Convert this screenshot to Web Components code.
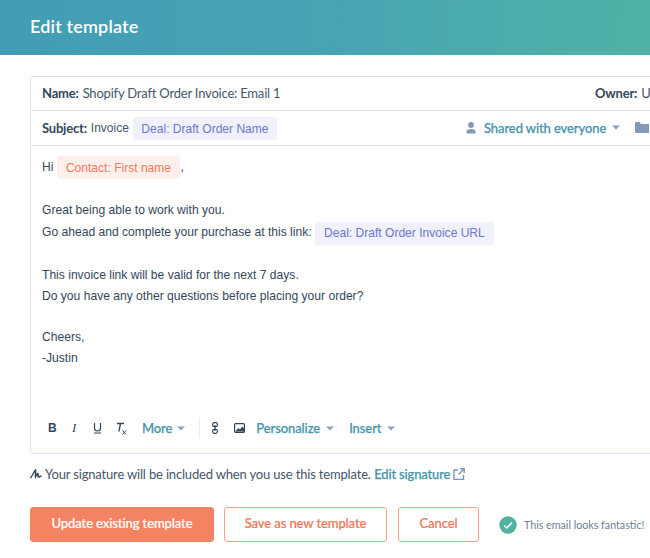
<!DOCTYPE html>
<html><head><meta charset="utf-8">
<style>
html,body{margin:0;padding:0;width:650px;height:558px;overflow:hidden;background:#fff;font-family:Lato,sans-serif;color:#33475b}
</style></head><body>
<template id="t-app"><style>
:host{display:flex;flex-direction:column;width:650px;height:558px;overflow:hidden}
main{display:flex;flex-direction:column;padding:21px 0 0 30px;width:700px;box-sizing:border-box}
</style><edit-header>Edit template</edit-header><main><slot></slot></main></template>

<template id="t-header"><style>
:host{display:flex;align-items:center;height:55px;padding:0 0 3px 30px;box-sizing:border-box;background:linear-gradient(95deg,#429db5 0%,#46a4b3 50%,#4fb3a6 100%);color:#fff;font:600 18px Lato,sans-serif;letter-spacing:.17px}
</style><slot></slot></template>

<template id="t-card"><style>
:host{display:flex;flex-direction:column;width:670px;height:378px;box-sizing:border-box;border:1px solid #dbe3ee;border-radius:3px 0 0 3px}
</style><slot></slot></template>

<template id="t-row"><style>
:host{display:flex;align-items:center;box-sizing:border-box;padding-left:11px;height:34px;padding-bottom:2px;border-bottom:1px solid #dbe3ee;font:400 13px Lato,sans-serif;letter-spacing:-.2px;color:#43566a;white-space:nowrap}
:host([sub]){height:35px;padding-bottom:1px}
b{font-weight:700;color:#33475b;margin-right:4px}
</style><b><slot name="label"></slot></b><slot></slot></template>

<template id="t-token"><style>
:host{display:inline-flex;align-items:center;height:23px;padding:0 8.5px;box-sizing:border-box;border-radius:2px;font:400 12.05px "Liberation Sans",sans-serif;letter-spacing:0;background:#f0f1fa;color:#6a78d1;white-space:nowrap;vertical-align:middle}
:host([contact]){background:#fdf0ec;color:#f2785a}
</style><slot></slot></template>

<template id="t-toolbar"><style>
:host{display:flex;align-items:center;height:24px;padding-left:17px;margin-top:auto;margin-bottom:13px;font:500 13px Lato,sans-serif;letter-spacing:-.1px;-webkit-text-stroke:.25px #4a95ad;color:#4a95ad}
::slotted(svg){flex:none}
</style><slot></slot></template>

<template id="t-btn"><style>
:host{display:inline-flex;align-items:center;justify-content:center;height:35px;box-sizing:border-box;border:1px solid #f9a28d;border-radius:3px;background:#fff;color:#f2785a;font:500 13px Lato,sans-serif;letter-spacing:-.1px;-webkit-text-stroke:.2px currentColor;white-space:nowrap;padding-bottom:3px}
:host([primary]){background:#f38363;border-color:#f38363;color:#fff}
</style><slot></slot></template>

<edit-app>
<edit-card>
 <edit-row><span slot="label">Name:</span><span>Shopify Draft Order Invoice: Email 1</span><span style="margin-left:auto;display:flex;width:104px"><b style="font-weight:700;color:#33475b;margin-right:4px">Owner:</b>U</span></edit-row>
 <edit-row sub><span slot="label">Subject:</span><span style="font:400 12px 'Liberation Sans',sans-serif;letter-spacing:0">Invoice</span><merge-token style="margin-left:4px;margin-top:2px">Deal: Draft Order Name</merge-token>
  <span style="margin-left:auto;width:233px;display:flex;align-items:center;color:#4a95ad;font:500 13px Lato,sans-serif;letter-spacing:-.1px;-webkit-text-stroke:.25px #4a95ad">
   <svg width="10" height="12" viewBox="0 0 10 12" style="margin-right:8px"><circle cx="5" cy="3" r="2.9" fill="#8499b5"/><path d="M.5 11.5V9.6C.5 7.9 2.2 7 5 7s4.500.9 4.500 2.600v1.900z" fill="#8499b5"/></svg>Shared with everyone<svg width="8" height="5" viewBox="0 0 8 5" style="margin-left:6px"><path d="M0 .5h8L4 4.500z" fill="#8fa3bc"/></svg>
   <svg style="margin-left:auto;margin-right:50px" width="14" height="11" viewBox="0 0 14 11"><path d="M0 1.500C0 .6.6 0 1.500 0h3L6 2h8v9H1.500C.6 11 0 10.400 0 9.500z" fill="#8499b5"/></svg></span>
 </edit-row>
 <email-body>
  <p style="margin:10px 0 0;height:21px;display:flex;align-items:center;padding-left:11px">Hi<merge-token contact style="margin:2px 0 0 4px">Contact: First name</merge-token><span style="margin-left:1px">,</span></p>
  <p style="margin:23px 0 0;padding-left:11px;height:21px;line-height:21px">Great being able to work with you.</p>
  <p style="margin:0;padding-left:11px;height:22px;display:flex;align-items:center">Go ahead and complete your purchase at this link:<merge-token style="margin:2px 0 0 3.500px;padding:0 9px">Deal: Draft Order Invoice URL</merge-token></p>
  <p style="margin:22px 0 0;padding-left:11px;height:21px;line-height:21px">This invoice link will be valid for the next 7 days.</p>
  <p style="margin:0;padding-left:11px;height:21px;line-height:21px">Do you have any other questions before placing your order?</p>
  <p style="margin:20px 0 0;padding-left:11px;height:21px;line-height:21px">Cheers,</p>
  <p style="margin:0;padding-left:11px;height:21px;line-height:21px">-Justin</p>
 </email-body>
 <edit-toolbar>
  <span style="font:700 12px 'Liberation Sans',sans-serif;-webkit-text-stroke:0;color:#33475b;width:23px">B</span>
  <span style="font:italic 400 13px 'Liberation Serif',serif;-webkit-text-stroke:0;color:#33475b;width:22px;text-indent:1px">I</span>
  <svg width="9" height="12" viewBox="0 0 9 12" style="margin-right:14px"><path d="M1.500 1v5a3 3 0 0 0 6 0V1M1 11h7" fill="none" stroke="#33475b" stroke-width="1.200"/></svg>
  <svg width="11" height="13" viewBox="0 0 11 13" style="margin-right:15px"><path d="M1 1.500h7M4.500 1.500l-1.600 8" fill="none" stroke="#33475b" stroke-width="1.300"/><path d="M6.500 8.500l3.500 4M10 8.500l-3.500 4" fill="none" stroke="#33475b" stroke-width="1"/></svg>
  <span>More</span><svg width="8" height="5" viewBox="0 0 8 5" style="margin:0 14px 0 5px"><path d="M0 .5h8L4 4.500z" fill="#8fa3bc"/></svg>
  <span style="width:1px;height:20px;background:#e7edf3;margin-right:12px"></span>
  <svg width="6" height="12" viewBox="0 0 6 12" style="margin-right:16px"><rect x=".7" y=".7" width="4.600" height="4" rx="1.500" fill="none" stroke="#33475b" stroke-width="1.200"/><rect x=".7" y="7.300" width="4.600" height="4" rx="1.500" fill="none" stroke="#33475b" stroke-width="1.200"/><path d="M3 3v6" stroke="#33475b" stroke-width="1.200"/></svg>
  <svg width="11" height="10" viewBox="0 0 11 10" style="margin-right:11px"><rect x=".6" y=".6" width="9.800" height="8.800" rx="1" fill="none" stroke="#33475b" stroke-width="1.200"/><path d="M1.500 8l3-3 1.500 1.500L8 3.500l2 2V8.500h-8.500z" fill="#33475b"/></svg>
  <span>Personalize</span><svg width="8" height="5" viewBox="0 0 8 5" style="margin:0 15px 0 6px"><path d="M0 .5h8L4 4.500z" fill="#8fa3bc"/></svg>
  <span>Insert</span><svg width="8" height="5" viewBox="0 0 8 5" style="margin-left:6px"><path d="M0 .5h8L4 4.500z" fill="#8fa3bc"/></svg>
 </edit-toolbar>
</edit-card>
<sig-line>
 <svg width="12" height="10" viewBox="0 0 12 10" style="margin-right:3px"><path d="M.5 9C2 7 4 3 5.500 1c.5 2-.5 5 0 7C6.500 6 7.500 4 8 4.500S7.500 8 8.500 8 10.500 7 11.500 7" fill="none" stroke="#33475b" stroke-width="1.400"/></svg>
 <span>Your signature will be included when you use this template.</span>
 <span style="color:#4a95ad;font-weight:500;margin-left:3.500px;-webkit-text-stroke:.25px #4a95ad">Edit signature</span>
 <svg width="12" height="12" viewBox="0 0 12 12" style="margin-left:3px"><path d="M5 2H1v9.500h9.500V7M7 .8h4.200V5M11 1L5.500 6.500" fill="none" stroke="#7c98b6" stroke-width="1.400"/></svg>
</sig-line>
<action-bar>
 <edit-btn primary style="width:184px">Update existing template</edit-btn>
 <edit-btn style="width:163px;margin-left:10px">Save as new template</edit-btn>
 <edit-btn style="width:81px;margin-left:11px">Cancel</edit-btn>
 <svg width="18" height="18" viewBox="0 0 18 18" style="margin-left:20px"><circle cx="9" cy="9" r="8.700" fill="#4fb39e"/><path d="M5 9.500l2.800 2.500L13 6.500" fill="none" stroke="#fff" stroke-width="1.600"/></svg>
 <span style="margin-left:7px;font:400 10.700px Lato,sans-serif;color:#6b7f96;white-space:nowrap">This email looks fantastic!</span>
</action-bar>
</edit-app>
<script>
function def(name,tid,extra){
  customElements.define(name,class extends HTMLElement{
    constructor(){super();const r=this.attachShadow({mode:'open'});
      if(tid)r.appendChild(document.getElementById(tid).content.cloneNode(true));
      else r.innerHTML=extra;}
  });
}
def('edit-app','t-app');def('edit-header','t-header');def('edit-card','t-card');def('edit-row','t-row');
def('merge-token','t-token');def('edit-toolbar','t-toolbar');def('edit-btn','t-btn');
def('email-body',null,'<style>:host{display:block;font:400 12.1px "Liberation Sans",sans-serif;color:#33475b}</style><slot></slot>');
def('sig-line',null,'<style>:host{display:flex;align-items:center;height:20px;margin-top:10px;font:400 13px Lato,sans-serif;letter-spacing:-.17px;color:#43566a;white-space:nowrap}</style><slot></slot>');
def('action-bar',null,'<style>:host{display:flex;align-items:center;margin-top:23px;height:35px}</style><slot></slot>');
</script>
</body></html>
